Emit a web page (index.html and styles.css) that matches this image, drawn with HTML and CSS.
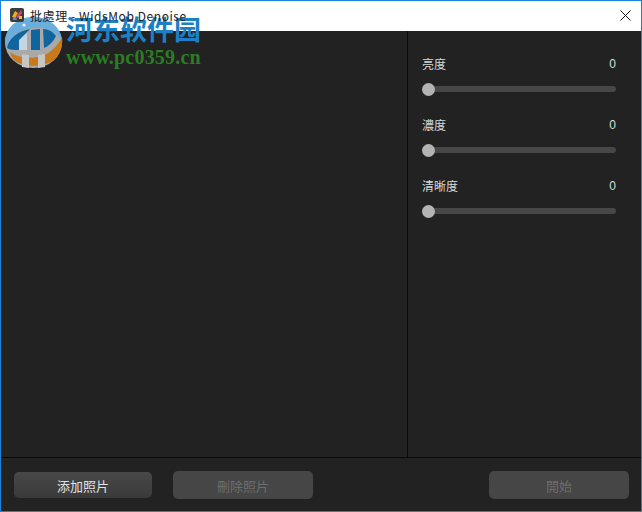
FILE: index.html
```html
<!DOCTYPE html>
<html lang="zh">
<head>
<meta charset="utf-8">
<title>批處理 - WidsMob Denoise</title>
<link rel="stylesheet" href="styles.css">
</head>
<body>
<div class="window">
  <header class="titlebar">
    <svg class="app-icon" width="14" height="14" viewBox="0 0 14 14">
      <rect width="14" height="14" rx="2" fill="#3c3c3c"/>
      <path d="M2 9 L5 3 L8 5 L5 10 Z" fill="#e8b021"/>
      <path d="M6 9 L11 2 L12 5 L8 10 Z" fill="#d8457a"/>
      <path d="M3 12 L7 12 L6 9 L3 9 Z" fill="#4a8fd8"/>
      <rect x="9" y="8" width="3" height="3" fill="#e8c23a"/>
    </svg>
    <span class="title">批處理 - WidsMob Denoise</span>
    <svg class="close" width="11" height="11" viewBox="0 0 11 11">
      <path d="M0.5 0.5 L10.5 10.5 M10.5 0.5 L0.5 10.5" stroke="#111" stroke-width="1" fill="none"/>
    </svg>
  </header>
  <main class="content">
    <section class="preview"></section>
    <aside class="panel">
      <div class="control">
        <div class="control-head"><span>亮度</span><span class="value">0</span></div>
        <div class="track"><div class="thumb"></div></div>
      </div>
      <div class="control">
        <div class="control-head"><span>濃度</span><span class="value">0</span></div>
        <div class="track"><div class="thumb"></div></div>
      </div>
      <div class="control">
        <div class="control-head"><span>清晰度</span><span class="value">0</span></div>
        <div class="track"><div class="thumb"></div></div>
      </div>
    </aside>
  </main>
  <footer class="footer">
    <button class="btn btn-active">添加照片</button>
    <button class="btn btn-disabled btn-remove">刪除照片</button>
    <button class="btn btn-disabled btn-start">開始</button>
  </footer>
</div>
<div class="watermark">
  <svg class="wm-logo" width="60" height="54" viewBox="4 16 60 54">
    <ellipse cx="33.5" cy="42.5" rx="28.5" ry="25.5" fill="#a9a9a9"/>
    <path d="M5 42 C5 28 18 17 33 17 C49 17 62 28 62 41 C56 30 44 27 33 28 C20 29 9 36 7 47 C6 45 5 44 5 42 Z" fill="#6aaedd"/>
    <path d="M7 48 C9 37 19 31 30 29 L21 38 L19 50 C14 50 10 50 7 48 Z" fill="#10659f"/>
    <path d="M19 40 L27 33 L27 50 L19 50 Z" fill="#c4d6e2"/>
    <path d="M31 30 L40 29 L40 50 L31 50 Z" fill="#10659f"/>
    <path d="M43 29 C49 29 53 32 56 36 C53 42 49 46 44 48 Z" fill="#10659f"/>
    <path d="M10 52 C20 60 42 60 52 50 C57 46 60 41 62 37 C63 44 61 52 56 58 C46 68 24 68 14 60 C12 58 11 55 10 52 Z" fill="#c8791a"/>
    <path d="M22 54 L29 55 L29 68 L22 67 Z M38 55 L45 54 L45 67 L38 68 Z" fill="#c6c6c6"/>
    <circle cx="24" cy="25" r="1.6" fill="#e8f2f8"/>
  </svg>
  <div class="wm-text">
    <div class="wm-cn">河东软件园</div>
    <div class="wm-url">www.pc0359.cn</div>
  </div>
</div>
</body>
</html>
```
FILE: styles.css
```css
* { box-sizing: border-box; }
html, body { margin: 0; padding: 0; }
body {
  width: 642px;
  height: 512px;
  overflow: hidden;
  position: relative;
  font-family: "Noto Sans CJK TC", "Noto Sans CJK SC", "Liberation Sans", sans-serif;
  background: #222;
}
.window {
  width: 642px;
  height: 512px;
  border: 1px solid #1883d7;
  display: flex;
  flex-direction: column;
  background: #222;
}
.titlebar {
  height: 30px;
  flex: none;
  background: #fff;
  display: flex;
  align-items: center;
  padding: 0 10px 2px 9px;
}
.app-icon { flex: none; position: relative; z-index: 2; }
.title {
  position: relative;
  z-index: 2;
  margin-left: 6px;
  font-size: 12px;
  color: #222;
  font-family: "Noto Sans CJK TC", "Noto Sans", sans-serif;
  letter-spacing: 0.58px;
  white-space: nowrap;
}
.close { margin-left: auto; }
.content {
  flex: 1;
  display: flex;
  min-height: 0;
  border-bottom: 1px solid #0a0a0a;
}
.preview {
  flex: 1;
  border-right: 1px solid #0a0a0a;
  background: #222;
}
.panel {
  width: 233px;
  flex: none;
  padding: 23px 25px 0 14px;
  display: flex;
  flex-direction: column;
  gap: 22px;
}
.control { height: 39px; }
.control-head {
  display: flex;
  justify-content: space-between;
  align-items: center;
  height: 20px;
  font-size: 12px;
  color: #d8d8d8;
  line-height: 20px;
}
.value {
  font-family: "Liberation Sans", sans-serif;
  color: #cfe0d8;
}
.track {
  position: relative;
  margin-top: 12px;
  height: 6px;
  border-radius: 3px;
  background: #474747;
}
.thumb {
  position: absolute;
  left: 0;
  top: -3.5px;
  width: 13px;
  height: 13px;
  border-radius: 50%;
  background: #b4b4b4;
}
.footer {
  height: 53px;
  flex: none;
  display: flex;
  align-items: center;
  padding: 1px 12px 0 13px;
}
.btn {
  border: none;
  font-family: inherit;
  font-size: 13px;
  border-radius: 5px;
  padding: 0;
  height: 28px;
  width: 140px;
}
.btn-active {
  width: 138px;
  height: 26px;
  color: #e2e2e2;
  background: linear-gradient(#484848, #3a3a3a);
}
.btn-disabled {
  color: #6d6d6d;
  background: #464646;
}
.btn-remove { margin-left: 21px; }
.btn-start { margin-left: auto; }
.watermark {
  position: absolute;
  left: 4px;
  top: 16px;
  z-index: 1;
  display: flex;
  pointer-events: none;
}
.wm-logo { flex: none; }
.wm-text { margin-left: 2px; margin-top: -2px; }
.wm-cn {
  font-family: "Noto Sans CJK SC", sans-serif;
  font-weight: 700;
  font-size: 27px;
  line-height: 30px;
  color: #1d7fc4;
  white-space: nowrap;
}
.wm-url {
  margin-top: 3px;
  font-family: "Liberation Serif", serif;
  font-weight: 700;
  font-size: 20px;
  line-height: 20px;
  color: #2a7d22;
  letter-spacing: 0.2px;
  white-space: nowrap;
}
```
